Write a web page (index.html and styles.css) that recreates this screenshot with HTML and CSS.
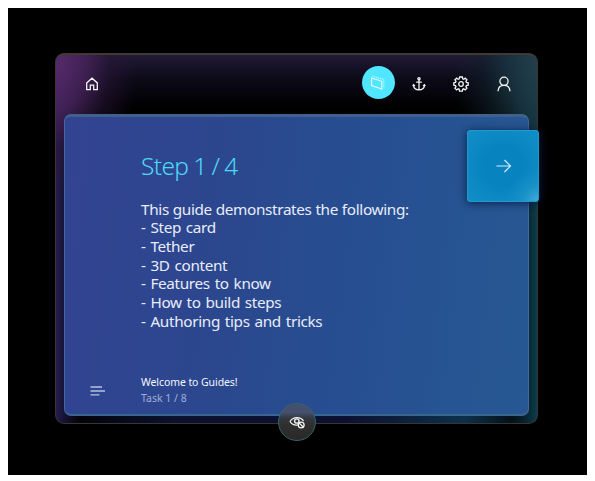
FILE: index.html
```html
<!DOCTYPE html>
<html lang="en">
<head>
<meta charset="utf-8">
<title>Guides</title>
<link rel="stylesheet" href="styles.css">
</head>
<body>
<main class="scene">
  <section class="panel">
    <header class="toolbar">
      <button class="tool home" aria-label="Home">
        <svg width="14" height="14" viewBox="0 0 14 14"><path d="M1.700 5.900 7 1.200l5.300 4.700v6.700H8.700V8.200H5.300v4.400H1.700z"/></svg>
      </button>
      <nav class="tools">
        <button class="tool active" aria-label="Step card">
          <svg width="16" height="16" viewBox="0 0 16 16"><path d="M1.600 3 11.800 6.300v7.700L1.600 10.600z"/><path class="dots" d="M2.500 1.300 13.800 4.400v8.800"/></svg>
        </button>
        <button class="tool" aria-label="Anchor">
          <svg width="14" height="16" viewBox="0 0 14 16"><circle cx="7" cy="2.700" r="1.100"/><path d="M7 4v10M4.200 6.200h5.600M1.600 8.600v1.200C2 12.400 4.200 13.700 7 13.900c2.800-.2 5-1.500 5.400-4.100V8.600M.7 10.200l.9-1.400 1.300 1.200M13.300 10.200l-.9-1.400-1.300 1.200"/></svg>
        </button>
        <button class="tool" aria-label="Settings">
          <svg width="16" height="16" viewBox="0 0 16 16"><path d="M6.600 1h2.800l.3 1.800 1 .4 1.500-1 1.700 1.700-1 1.500.5 1.100 1.800.3v2.400l-1.800.4-.5 1 1 1.500-1.700 1.800-1.500-1.100-1 .4-.3 1.900H6.600l-.4-1.900-1-.4-1.500 1.100-1.800-1.800 1.100-1.500-.5-1L.8 9.200V6.800l1.700-.3.500-1.100-1.100-1.500 1.800-1.700 1.500 1 1-.4z"/><circle cx="8" cy="8" r="2.300"/></svg>
        </button>
        <button class="tool" aria-label="Profile">
          <svg width="14" height="16" viewBox="0 0 14 16"><circle cx="7" cy="5.300" r="4.100"/><path d="M1 15.200c.2-3.700 2.500-5.800 6-5.800s5.800 2.100 6 5.800"/></svg>
        </button>
      </nav>
    </header>
    <article class="card">
      <div class="content">
        <h1>Step 1 / 4</h1>
        <p class="guide intro">This guide demonstrates the following:</p>
        <p class="guide">
          - Step card<br>
          - Tether<br>
          - 3D content<br>
          - Features to know<br>
          - How to build steps<br>
          - Authoring tips and tricks</p>
      </div>
      <footer class="outline">
        <button class="tool menu" aria-label="Outline">
          <svg width="16" height="10" viewBox="0 0 16 10"><path d="M.5 1h11.500M.5 5H15M.5 8.800h9"/></svg>
        </button>
        <div class="task">
          <p class="task-name">Welcome to Guides!</p>
          <p class="task-count">Task 1 / 8</p>
        </div>
      </footer>
    </article>
    <button class="next" aria-label="Next step">
      <svg width="16" height="14" viewBox="0 0 16 14"><path d="M.5 7h14M8.500 1l6 6-6 6"/></svg>
    </button>
    <button class="visibility" aria-label="Hide holograms">
      <svg width="17" height="13" viewBox="0 0 17 13"><path d="M1 5.500C4 .3 11.500.3 14.600 5M1 5.500C3 8.500 6 9.500 9 8.900"/><circle cx="7.800" cy="5" r="2.200"/><circle cx="12.200" cy="9" r="2.900"/><path d="m10.300 7.100 3.900 3.900"/></svg>
    </button>
  </section>
</main>
</body>
</html>
```

FILE: styles.css
```css
* { box-sizing: border-box; }

body {
  margin: 0;
  padding: 8px;
  background: #fff;
  font-family: "Noto Sans", "Open Sans", sans-serif;
  color: #e9edf8;
}

h1, p { margin: 0; }

button {
  border: 0;
  padding: 0;
  background: none;
}

svg {
  display: block;
  fill: none;
  stroke: #f4f4f4;
  stroke-width: 1.3;
}

.scene {
  width: 579px;
  height: 467px;
  padding: 45px 0 0 47px;
  background: #000;
}

.panel {
  position: relative;
  display: flex;
  flex-direction: column;
  width: 483px;
  height: 371px;
  padding: 0 8px 7px 8px;
  border: 1px solid #3b3430;
  border-top: 2px solid #403a31;
  border-radius: 9px;
  background:
    radial-gradient(ellipse 82px 130px at 0 8px, #542a68 0%, #47235bdd 35%, #2a163a88 65%, #150b1e00 100%),
    radial-gradient(ellipse 85px 150px at 483px 8px, #233f4d 0%, #1a3541dd 35%, #10232c88 65%, #08141a00 100%),
    linear-gradient(90deg, #28265c00, #0a1230 25%, #0b1130 60%, #0d304a 85%, #10506400) 0 100% / 100% 12px no-repeat,
    linear-gradient(90deg, #241d50 0, #241d5000 24px, #0c3d4d00 455px, #0c3d4d 481px),
    linear-gradient(180deg, #211a36 0, #0c0a18 24px, #000 52px);
}

.toolbar {
  display: flex;
  justify-content: space-between;
  height: 59px;
  padding: 11px 9px 0 12px;
}

.tools { display: flex; gap: 9.500px; }

.tool {
  display: grid;
  place-items: center;
  width: 32px;
  height: 34px;
}

.home { margin-top: 1px; }
.tools .tool { position: relative; left: -1px; }
.tools .tool:last-child { left: 0; margin-left: 1px; }

.tools .active {
  width: 33px;
  height: 33px;
  margin-right: -1px;
  border-radius: 50%;
  background: #50e6ff;
}

.tools .tool:not(.active) svg { margin-top: 1px; }

.active svg { stroke: #e8fdff; stroke-width: 1.1; }
.active .dots { stroke-dasharray: 1 1; }

.card {
  display: flex;
  flex: 1;
  flex-direction: column;
  justify-content: space-between;
  padding: 31px 0 6px 76px;
  border: 1px solid #42689c;
  border-top: 3px solid #40618c;
  border-bottom: 2px solid #39658f;
  border-radius: 7px;
  background: linear-gradient(97deg, #334392 0%, #2b478e 35%, #264f92 65%, #275892 100%);
}

h1 {
  height: 35px;
  font: 350 24.500px/35px "Noto Sans", "Open Sans", sans-serif;
  letter-spacing: -.65px;
  word-spacing: -.8px;
  color: #4cd9f5;
}

.guide {
  font-size: 15.300px;
  line-height: 18.700px;
  letter-spacing: -.34px;
  word-spacing: 1.200px;
  white-space: nowrap;
}

.intro {
  margin-top: 16.500px;
  word-spacing: .2px;
}

.outline {
  display: flex;
  align-items: center;
  margin-left: -59px;
}

.menu { margin-top: 1px; }
.menu svg { stroke: #b5c1e2; }
.task { margin-left: 27px; }

.task-name, .task-count {
  font-size: 10.500px;
  line-height: 15.500px;
}

.task-name { letter-spacing: -.08px; color: #f4f6fc; }
.task-count { color: #9faed6; }

.next {
  position: absolute;
  top: 75px;
  right: -2px;
  display: grid;
  place-items: center;
  width: 72px;
  height: 72px;
  border: 1px solid #2299cc;
  border-radius: 3px;
  background:
    radial-gradient(circle at 100% 100%, #4bb2ddcc 0, #2a9bce66 15px, #138fc700 32px),
    radial-gradient(circle, #0783c0 40%, #138fc7 100%);
  box-shadow: 0 1px 9px #08204a;
}

.next svg { margin-left: 1px; stroke: #d9eef8; stroke-width: 1.2; }

.visibility {
  position: absolute;
  top: 348px;
  left: 222px;
  display: grid;
  place-items: center;
  width: 38px;
  height: 38px;
  border: 1px solid #34646a;
  border-radius: 50%;
  background: linear-gradient(#45506c 0 24%, #343a42 38%, #30302f 55%, #292929);
}
```
